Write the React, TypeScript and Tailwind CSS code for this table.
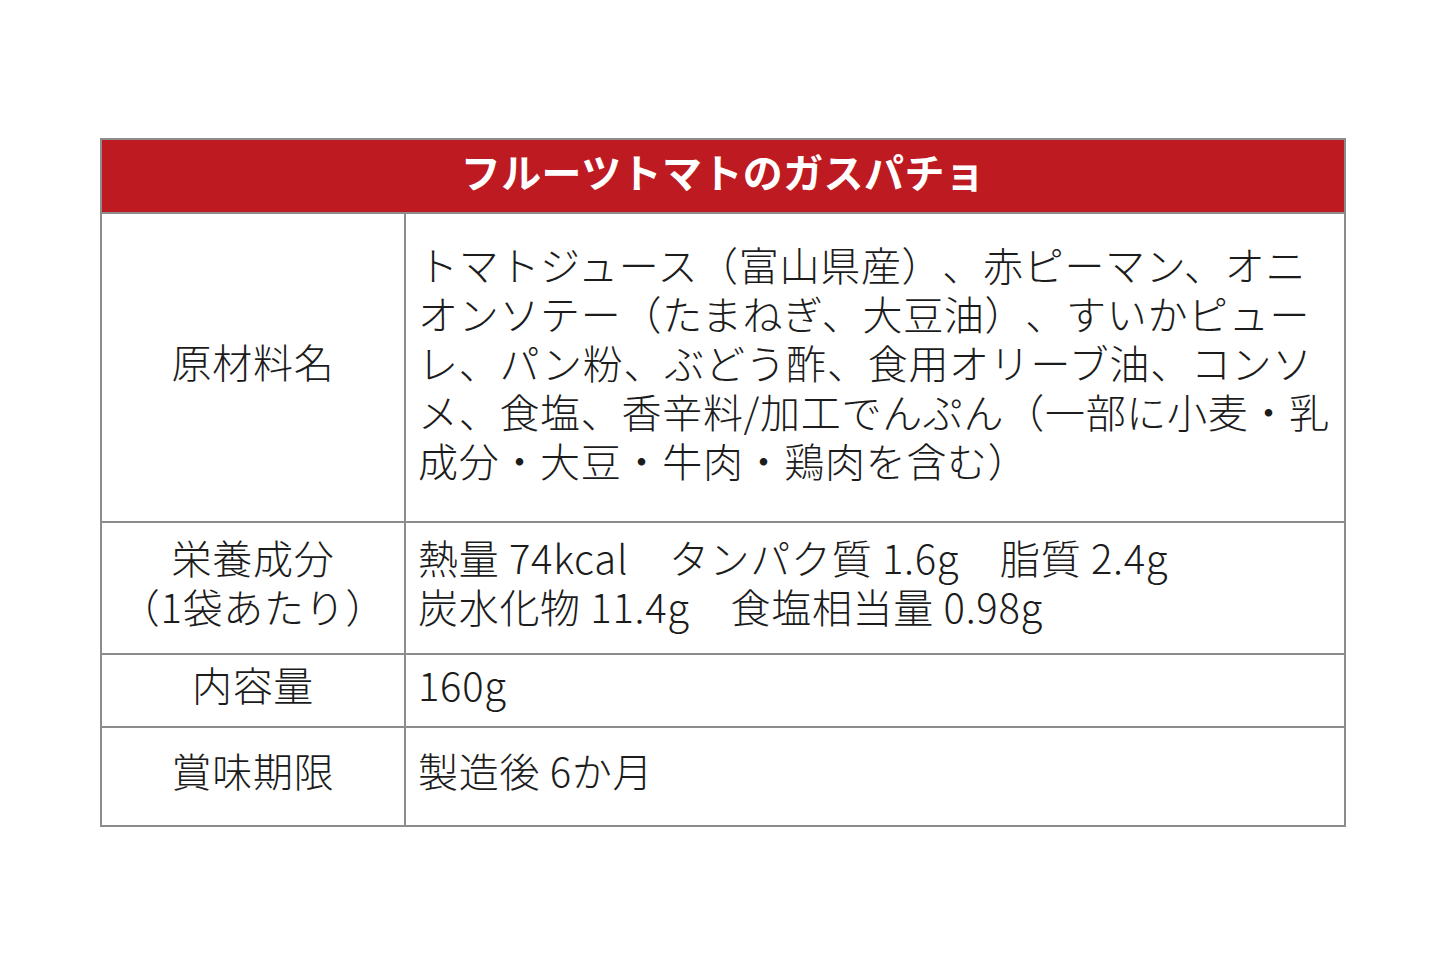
export default function App() {
  const cell = "bg-white flex items-center pb-[12px]";
  const label = `${cell} justify-center text-center`;
  const value = `${cell} pl-[12px] whitespace-nowrap`;

  return (
    <div
      className="min-h-screen w-full bg-white pt-[138px] pl-[100px] text-[#1c1c1c] [text-spacing-trim:space-all]"
      style={{ fontFamily: '"Noto Sans CJK JP", "Noto Sans", sans-serif' }}
    >
      <div className="grid w-[1246px] grid-cols-[302px_938px] grid-rows-[72px_307px_130px_71px_97px] gap-[2px] bg-[#8c8c8c] p-[2px] text-[40px] leading-[49px] font-light tracking-[0.7px]">
        {/* Title */}
        <div className="col-span-2 flex items-center justify-center bg-[#be1a21] pb-[10px] text-[40px] font-bold tracking-[0.4px] text-white">
          フルーツトマトのガスパチョ
        </div>

        {/* Ingredients */}
        <div className={label}>原材料名</div>
        <div className={`${value} pt-[2px]`}>
          <div>
            トマトジュース（富山県産）、赤ピーマン、オニ
            <br />
            オンソテー（たまねぎ、大豆油）、すいかピュー
            <br />
            レ、パン粉、ぶどう酢、食用オリーブ油、コンソ
            <br />
            メ、食塩、香辛料/加工でんぷん（一部に小麦・乳
            <br />
            成分・大豆・牛肉・鶏肉を含む）
          </div>
        </div>

        {/* Nutrition */}
        <div className={label}>
          <div>
            栄養成分
            <br />
            （1袋あたり）
          </div>
        </div>
        <div className={value}>
          <div>
            熱量 74kcal　タンパク質 1.6g　脂質 2.4g
            <br />
            炭水化物 11.4g　食塩相当量 0.98g
          </div>
        </div>

        {/* Amount */}
        <div className={label}>内容量</div>
        <div className={value}>160g</div>

        {/* Best before */}
        <div className={label}>賞味期限</div>
        <div className={value}>製造後 6か月</div>
      </div>
    </div>
  );
}
